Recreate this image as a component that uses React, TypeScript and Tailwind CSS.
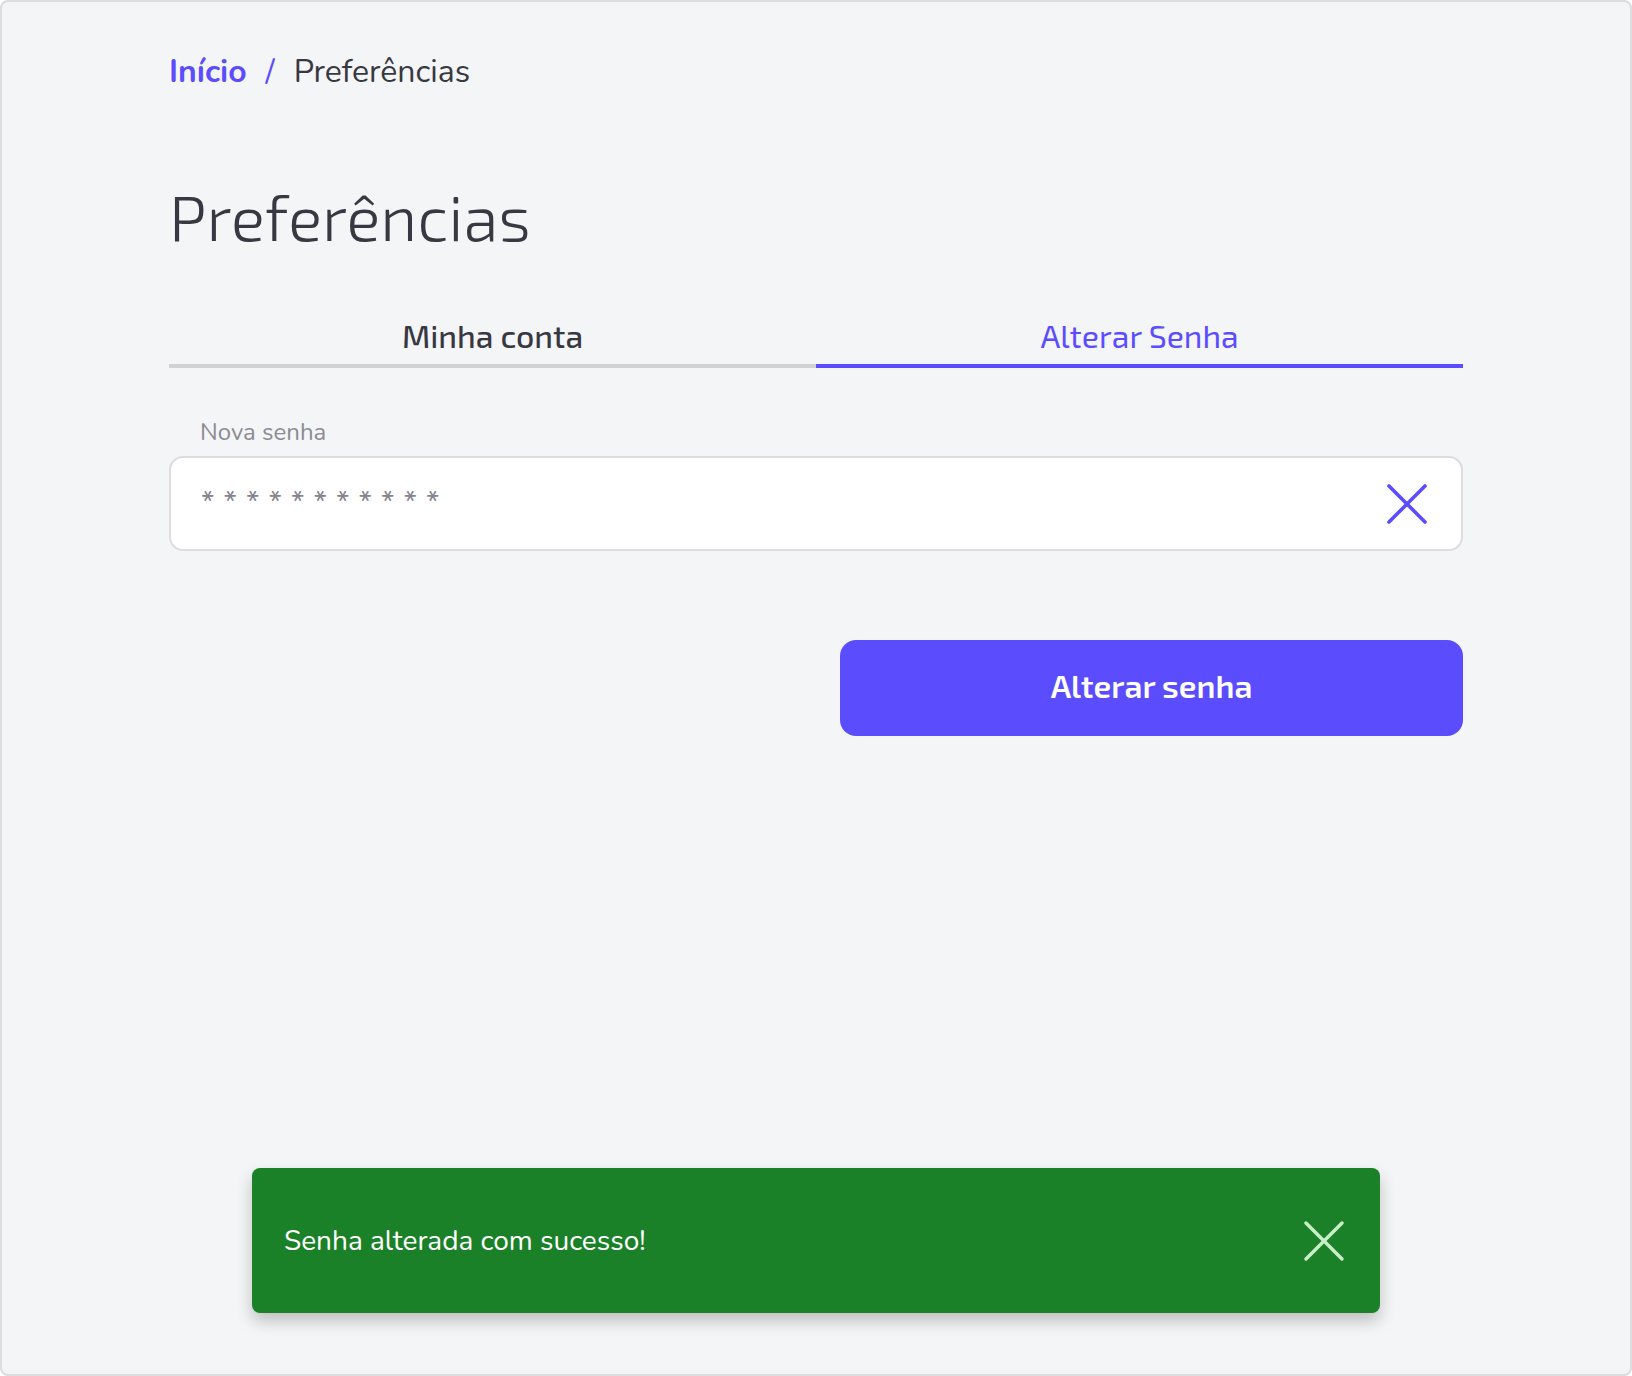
const body = { fontFamily: "Nunito, Lato, 'Open Sans', sans-serif" };
const display = { fontFamily: "'Exo 2', Roboto, 'Open Sans', sans-serif" };

function Cross({ className, stroke }: { className?: string; stroke: number }) {
  return (
    <svg viewBox="0 0 40 40" className={className} fill="none" stroke="currentColor" strokeWidth={stroke} strokeLinecap="round">
      <path d="M2 2 L38 38 M38 2 L2 38" />
    </svg>
  );
}

export default function App() {
  return (
    <div className="relative h-[1376px] w-full overflow-hidden rounded-lg border-2 border-[#dcdce1] bg-[#f4f5f7]">
      <div className="mx-auto w-[1294px] pt-[48px]">
        {/* Breadcrumb */}
        <nav className="flex items-center gap-[19px] text-[32px] leading-[44px]" style={body}>
          <a className="font-bold text-[#5b4dfd]">Início</a>
          <span className="text-[#5b4dfd]">/</span>
          <span className="text-[#383842]">Preferências</span>
        </nav>

        <h1
          className="mt-[84px] text-[64px] font-light leading-[76px] text-[#383842]"
          style={display}
        >
          Preferências
        </h1>

        {/* Tabs */}
        <div className="mt-[59px] grid grid-cols-2">
          <button
            className="border-b-4 border-[#d2d2d6] pb-[7px] text-[32px] font-medium leading-[44px] text-[#383842]"
            style={display}
          >
            Minha conta
          </button>
          <button
            className="border-b-4 border-[#5b4dfd] pb-[7px] text-[32px] leading-[44px] text-[#5b4dfd]"
            style={display}
          >
            Alterar Senha
          </button>
        </div>

        {/* Field */}
        <label className="mt-[48px] block pl-[31px] text-[24px] leading-[32px] text-[#8b8b94]" style={body}>
          Nova senha
        </label>
        <div className="mt-[8px] flex h-[95px] items-center rounded-[14px] border-2 border-[#dcdce1] bg-white pl-[30px] pr-[34px]">
          <span className="flex-1 pb-[2px] text-[30px] tracking-[9px] text-[#85858f]" style={body}>
            ***********
          </span>
          <Cross stroke={3.6} className="h-[40px] w-[40px] text-[#5b4dfd]" />
        </div>

        {/* Submit */}
        <div className="mt-[89px] flex justify-end">
          <button
            className="h-[96px] w-[623px] rounded-[16px] bg-[#5b4dfd] pb-[6px] text-[32px] font-semibold text-white"
            style={display}
          >
            Alterar senha
          </button>
        </div>
      </div>

      {/* Toast */}
      <div className="absolute bottom-[61px] left-1/2 flex h-[145px] w-[1128px] -translate-x-1/2 items-center justify-between rounded-lg bg-[#1b8128] pl-[32px] pr-[36px] shadow-[0_8px_16px_rgba(0,0,0,0.22)]">
        <span className="text-[28px] text-white" style={body}>
          Senha alterada com sucesso!
        </span>
        <Cross stroke={3.4} className="h-[40px] w-[40px] text-[#c9efc9]" />
      </div>
    </div>
  );
}
